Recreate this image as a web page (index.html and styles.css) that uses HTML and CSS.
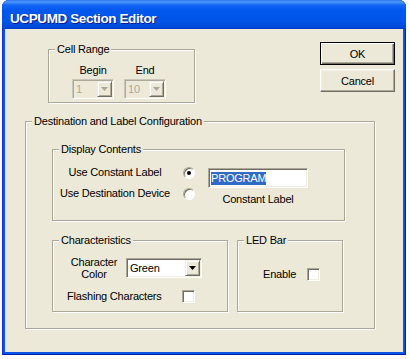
FILE: index.html
```html
<!doctype html>
<html lang="en">

<head>
  <meta charset="UTF-8" />
  <title>UCPUMD Section Editor</title>
  <link rel="stylesheet" href="styles.css">
</head>

<body>
  <div class="window">
    <div class="titlebar">UCPUMD Section Editor</div>

    <div class="client">
      <div class="top-row">
        <fieldset class="group cell-range">
          <legend>Cell Range</legend>
          <div class="range-fields">
            <div class="range-field">
              <span class="field-label">Begin</span>
              <div class="combo combo-disabled">
                <span class="combo-value">1</span>
                <span class="combo-btn"><svg width="7" height="4" viewBox="0 0 7 4"><path d="M0 0h7L3.5 4z" /></svg></span>
              </div>
            </div>
            <div class="range-field">
              <span class="field-label">End</span>
              <div class="combo combo-disabled">
                <span class="combo-value">10</span>
                <span class="combo-btn"><svg width="7" height="4" viewBox="0 0 7 4"><path d="M0 0h7L3.5 4z" /></svg></span>
              </div>
            </div>
          </div>
        </fieldset>

        <div class="buttons">
          <div class="btn btn-default">OK</div>
          <div class="btn">Cancel</div>
        </div>
      </div>

      <fieldset class="group dest">
        <legend>Destination and Label Configuration</legend>

        <fieldset class="group display">
          <legend>Display Contents</legend>
          <div class="display-body">
            <div class="choices">
              <span class="choice-label">Use Constant Label</span>
              <span class="radio radio-checked"></span>
              <span class="choice-label">Use Destination Device</span>
              <span class="radio"></span>
            </div>
            <div class="label-box">
              <div class="textbox"><span class="selection">PROGRAM</span></div>
              <span class="caption">Constant Label</span>
            </div>
          </div>
        </fieldset>

        <div class="lower-row">
          <fieldset class="group chars">
            <legend>Characteristics</legend>
            <div class="chars-color">
              <span class="color-label">Character<br />Color</span>
              <div class="combo combo-green">
                <span class="combo-value">Green</span>
                <span class="combo-btn"><svg width="7" height="4" viewBox="0 0 7 4"><path d="M0 0h7L3.5 4z" /></svg></span>
              </div>
            </div>
            <div class="check-row chars-flash">
              <span class="check-label flash-label">Flashing Characters</span>
              <span class="checkbox"></span>
            </div>
          </fieldset>

          <fieldset class="group led">
            <legend>LED Bar</legend>
            <div class="check-row led-enable">
              <span class="check-label enable-label">Enable</span>
              <span class="checkbox"></span>
            </div>
          </fieldset>
        </div>
      </fieldset>
    </div>
  </div>
</body>

</html>
```

FILE: styles.css
```css
body {
  margin: 0;
  background: #FFFFFF;
  font-family: "Liberation Sans", Arial, sans-serif;
  font-size: 11px;
  letter-spacing: -0.2px;
  color: #000000;
}

/* window frame */
.window {
  width: 404px;
  height: 355px;
  margin-left: 2px;
  box-sizing: border-box;
  padding: 0 3px 3px;
  display: flex;
  flex-direction: column;
  border-radius: 7px 7px 0 0;
  background: #0A55E6;
  box-shadow: inset 1px 0 0 #0831D9, inset -1px 0 0 #0020B0, inset 0 -1px 0 #0020B0;
}

.titlebar {
  flex: none;
  height: 29px;
  margin: 0 -3px;
  box-sizing: border-box;
  padding: 8px 0 0 8px;
  line-height: 21px;
  border-radius: 7px 7px 0 0;
  background: linear-gradient(to bottom, #2C7BF5 0px, #4C96FA 2px, #1467F5 5px, #0058EE 10px, #0054E6 22px, #0049D6 27px, #003DCB 29px);
  color: #FFFFFF;
  font-weight: bold;
  font-size: 13.5px;
  letter-spacing: -0.4px;
  text-shadow: 1px 1px 0 #0A1C8C;
  white-space: nowrap;
}

.client {
  flex: 1;
  background: #ECE9D8;
}

/* group boxes */
.group {
  margin: 0;
  padding: 0;
  min-inline-size: 0;
  box-sizing: border-box;
  border: 1px solid #ACA899;
  box-shadow: 1px 1px 0 #FFFFFF, inset 1px 1px 0 #FFFFFF;
}

.group legend {
  margin-left: 6px;
  padding: 0 2px;
  line-height: 13px;
  background: #ECE9D8;
}

.top-row {
  display: flex;
  align-items: flex-start;
}

.cell-range {
  width: 147px;
  height: 60px;
  margin: 14px 0 0 43px;
}

.range-fields {
  display: flex;
  gap: 10px;
  padding: 8px 0 0 23px;
}

.range-field {
  display: flex;
  flex-direction: column;
  align-items: center;
  gap: 2px;
  line-height: 13px;
}

.buttons {
  display: flex;
  flex-direction: column;
  gap: 4px;
  margin: 13px 8px 0 auto;
}

.btn {
  width: 75px;
  height: 23px;
  box-sizing: border-box;
  display: flex;
  align-items: center;
  justify-content: center;
  border: 1px solid;
  border-color: #FFFFFF #716F64 #716F64 #FFFFFF;
  box-shadow: inset -1px -1px 0 #ACA899, inset 1px 1px 0 #F1EFE2;
  background: #ECE9D8;
}

.btn-default {
  border-color: #000000;
  box-shadow: inset 1px 1px 0 #FFFFFF, inset -1px -1px 0 #716F64, inset -2px -2px 0 #ACA899;
}

/* combo boxes */
.combo {
  height: 20px;
  box-sizing: border-box;
  display: flex;
  align-items: center;
  border: 1px solid;
  border-color: #ACA899 #FFFFFF #FFFFFF #ACA899;
  box-shadow: inset 1px 1px 0 #716F64, inset -1px -1px 0 #F1EFE2;
  padding: 1px;
  background: #FFFFFF;
}

.combo-value {
  flex: 1;
  padding-left: 2px;
  line-height: 13px;
}

.combo-btn {
  width: 15px;
  height: 16px;
  box-sizing: border-box;
  display: flex;
  align-items: center;
  justify-content: center;
  border: 1px solid;
  border-color: #F1EFE2 #716F64 #716F64 #F1EFE2;
  box-shadow: inset 1px 1px 0 #FFFFFF, inset -1px -1px 0 #ACA899;
  background: #ECE9D8;
}

.combo-btn svg {
  fill: #000000;
}

.combo-disabled {
  width: 42px;
  background: #ECE9D8;
  border-color: #C9C7BA #FFFFFF #FFFFFF #C9C7BA;
  box-shadow: inset 1px 1px 0 #ACA899, inset -1px -1px 0 #F1EFE2;
  color: #ACA899;
}

.combo-disabled .combo-btn svg {
  fill: #ACA899;
}

.combo-green {
  width: 76px;
}

/* destination */
.dest {
  width: 350px;
  height: 214px;
  margin: 12px 0 0 20px;
}

.display {
  width: 293px;
  height: 78px;
  margin: 15px 0 0 26px;
}

.display-body {
  display: flex;
  align-items: flex-start;
}

.choices {
  display: grid;
  grid-template-columns: 118px 12px;
  column-gap: 9px;
  row-gap: 8px;
  align-items: center;
  margin: 10px 0 0 3px;
  line-height: 13px;
}

.choice-label {
  text-align: center;
  white-space: nowrap;
}

.radio {
  width: 12px;
  height: 12px;
  box-sizing: border-box;
  display: flex;
  align-items: center;
  justify-content: center;
  border-radius: 50%;
  border: 1px solid;
  border-color: #ACA899 #FFFFFF #FFFFFF #ACA899;
  box-shadow: inset 1px 1px 0 #716F64;
  background: #FFFFFF;
}

.radio-checked::after {
  content: "";
  width: 4px;
  height: 4px;
  border-radius: 50%;
  background: #000000;
}

.label-box {
  display: flex;
  flex-direction: column;
  align-items: center;
  margin: 12px 0 0 13px;
}

.textbox {
  width: 100px;
  height: 20px;
  box-sizing: border-box;
  display: flex;
  align-items: center;
  padding-left: 1px;
  border: 1px solid;
  border-color: #ACA899 #FFFFFF #FFFFFF #ACA899;
  box-shadow: inset 1px 1px 0 #716F64, inset -1px -1px 0 #F1EFE2;
  background: #FFFFFF;
}

.selection {
  margin-left: 1px;
  line-height: 13px;
  background: #316AC5;
  color: #FFFFFF;
}

.caption {
  margin-top: 5px;
  line-height: 13px;
}

.lower-row {
  display: flex;
  margin: 13px 0 0 26px;
}

.chars {
  width: 176px;
  height: 78px;
}

.led {
  width: 106px;
  height: 78px;
  margin-left: 9px;
}

.chars-color {
  display: flex;
  align-items: center;
  gap: 2px;
  margin: 9px 0 0 11px;
}

.color-label {
  width: 60px;
  text-align: center;
  line-height: 12px;
}

.check-row {
  display: flex;
  align-items: center;
  line-height: 13px;
}

.chars-flash {
  margin: 10px 0 0 14px;
}

.flash-label {
  width: 115px;
  white-space: nowrap;
}

.led-enable {
  margin: 21px 0 0 25px;
}

.enable-label {
  width: 44px;
}

.checkbox {
  width: 13px;
  height: 13px;
  box-sizing: border-box;
  border: 1px solid;
  border-color: #ACA899 #FFFFFF #FFFFFF #ACA899;
  box-shadow: inset 1px 1px 0 #716F64, inset -1px -1px 0 #F1EFE2;
  background: #FFFFFF;
}
```
